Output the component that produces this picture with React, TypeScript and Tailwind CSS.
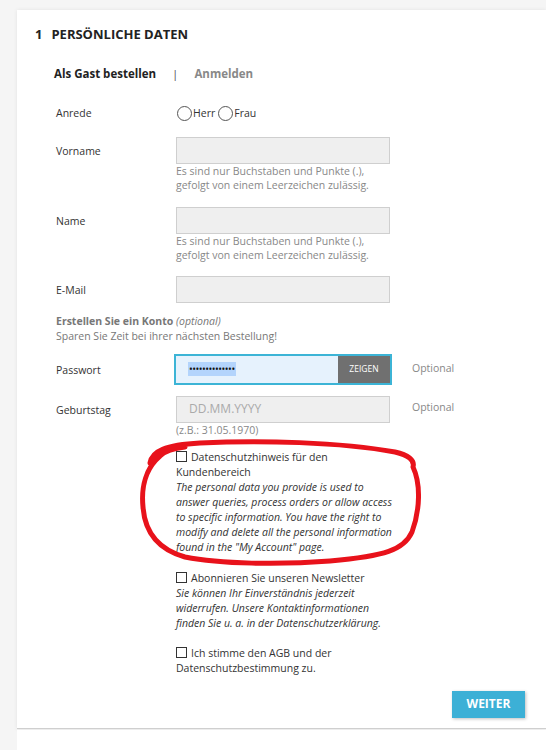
import React from 'react';

const font = { fontFamily: '"Open Sans", "Noto Sans", sans-serif' };

function Field({ label, placeholder, children }: { label: string; placeholder?: string; children?: React.ReactNode }) {
  return (
    <div className="flex items-center">
      <div className="w-[120px] text-[10.5px] text-[#333] pt-[3px]">{label}</div>
      <div className="w-[214px] h-[27px] bg-[#efefef] border border-[#cfcfcf] flex items-center pl-[12px] text-[12px] text-[#aaa]">
        {placeholder}
      </div>
      {children}
    </div>
  );
}

function Hint({ children }: { children: React.ReactNode }) {
  return <div className="ml-[120px] w-[230px] text-[10.5px] leading-[14px] text-[#888]">{children}</div>;
}

function Checkbox() {
  return <span className="inline-block w-[11px] h-[11px] border-[1.5px] border-[#333] mr-[4px] align-[-1px]" />;
}

function Radio({ label }: { label: string }) {
  return (
    <span className="flex items-center gap-[1px]">
      <span className="w-[15px] h-[15px] rounded-full border border-[#555]" />
      <span>{label}</span>
    </span>
  );
}

export default function App() {
  return (
    <div className="min-h-screen bg-[#f5f5f5] pl-[17px] pt-[10px]" style={font}>
      <div className="bg-white shadow-[0_0_4px_rgba(0,0,0,0.08)] border-b border-[#cfcfcf] pb-[10px]">
        {/* Section header */}
        <div className="pl-[18px] pt-[15px] flex gap-[9px] text-[13px] font-bold text-[#222]">
          <span>1</span>
          <span>PERSÖNLICHE DATEN</span>
        </div>

        {/* Tabs */}
        <div className="pl-[37px] mt-[20px] flex items-center text-[11.5px] font-bold">
          <span className="text-[#222]">Als Gast bestellen</span>
          <span className="mx-[16px] text-[#555] font-normal">|</span>
          <span className="text-[#888]">Anmelden</span>
        </div>

        <div className="pl-[39px] text-[10.5px] text-[#333]">
          {/* Anrede */}
          <div className="flex items-center mt-[24px]">
            <div className="w-[121px]">Anrede</div>
            <div className="flex items-center gap-[3px]">
              <Radio label="Herr" />
              <Radio label="Frau" />
            </div>
          </div>

          <div className="mt-[15px]">
            <Field label="Vorname" />
            <Hint>
              Es sind nur Buchstaben und Punkte (.),
              <br />
              gefolgt von einem Leerzeichen zulässig.
            </Hint>
          </div>

          <div className="mt-[15px]">
            <Field label="Name" />
            <Hint>
              Es sind nur Buchstaben und Punkte (.),
              <br />
              gefolgt von einem Leerzeichen zulässig.
            </Hint>
          </div>

          <div className="mt-[14px]">
            <Field label="E-Mail" />
          </div>

          {/* Konto */}
          <div className="mt-[11px] leading-[15px]">
            <div className="text-[#777]">
              <span className="font-bold">Erstellen Sie ein Konto</span> <span className="italic">(optional)</span>
            </div>
            <div className="text-[#777] text-[10.5px]">Sparen Sie Zeit bei ihrer nächsten Bestellung!</div>
          </div>

          {/* Passwort */}
          <div className="flex items-center mt-[10px]">
            <div className="w-[118px] pt-[3px]">Passwort</div>
            <div className="w-[218px] h-[31px] border-2 border-[#3cb4d6] bg-[#e6f2fd] flex items-center">
              <div className="flex-1 pl-[12px]">
                <span className="bg-[#b3d4fc] text-[#111] text-[10px] tracking-[-0.5px] leading-[16px] px-[1px]">••••••••••••••</span>
              </div>
              <div className="w-[52px] h-full bg-[#707070] text-white text-[8.5px] flex items-center justify-center">ZEIGEN</div>
            </div>
            <div className="ml-[20px] text-[#888]">Optional</div>
          </div>

          {/* Geburtstag */}
          <div className="mt-[11px]">
            <Field label="Geburtstag" placeholder="DD.MM.YYYY">
              <div className="ml-[22px] text-[#888] -mt-[3px]">Optional</div>
            </Field>
            <Hint>(z.B.: 31.05.1970)</Hint>
          </div>

          {/* Checkboxes */}
          <div className="ml-[120px] w-[218px] text-[10.5px] leading-[15px] text-[#333]">
            <div className="mt-[13px] relative">
              <div>
                <Checkbox />
                Datenschutzhinweis für den Kundenbereich
              </div>
              <div className="italic">
                The personal data you provide is used to answer queries, process orders or allow access to specific information. You have the right to modify and delete all the personal information found in the "My Account" page.
              </div>
              {/* hand-drawn red marker around the privacy notice */}
              <svg className="absolute left-[-46px] top-[-13px] pointer-events-none" width="300" height="140" viewBox="130 435 300 140">
                <path
                  d="M150 461 C 152 449, 165 443, 200 441 C 260 438, 340 440, 395 450 C 408 453, 415 458, 413 465 C 421 482, 420 508, 412 530 C 404 548, 385 554, 330 559 C 280 563, 220 562, 185 555 C 160 548, 145 532, 143 505 C 141 485, 146 466, 160 454 C 166 448, 175 446, 185 445"
                  fill="none"
                  stroke="#e8121b"
                  strokeWidth="5"
                  strokeLinecap="round"
                  strokeLinejoin="round"
                />
              </svg>
            </div>

            <div className="mt-[16px]">
              <div>
                <Checkbox />
                Abonnieren Sie unseren Newsletter
              </div>
              <div className="italic">
                Sie können Ihr Einverständnis jederzeit widerrufen. Unsere Kontaktinformationen finden Sie u. a. in der Datenschutzerklärung.
              </div>
            </div>

            <div className="mt-[15px]">
              <Checkbox />
              Ich stimme den AGB und der Datenschutzbestimmung zu.
            </div>
          </div>

          {/* Weiter */}
          <div className="flex justify-end w-[469px] mt-[15px]">
            <button className="w-[73px] h-[27px] bg-[#3cb0d6] text-white text-[12px] font-bold shadow-[1px_1px_3px_rgba(0,0,0,0.25)]">
              WEITER
            </button>
          </div>
        </div>
      </div>
      <div className="bg-white h-[40px] mt-[1px]" />
    </div>
  );
}
